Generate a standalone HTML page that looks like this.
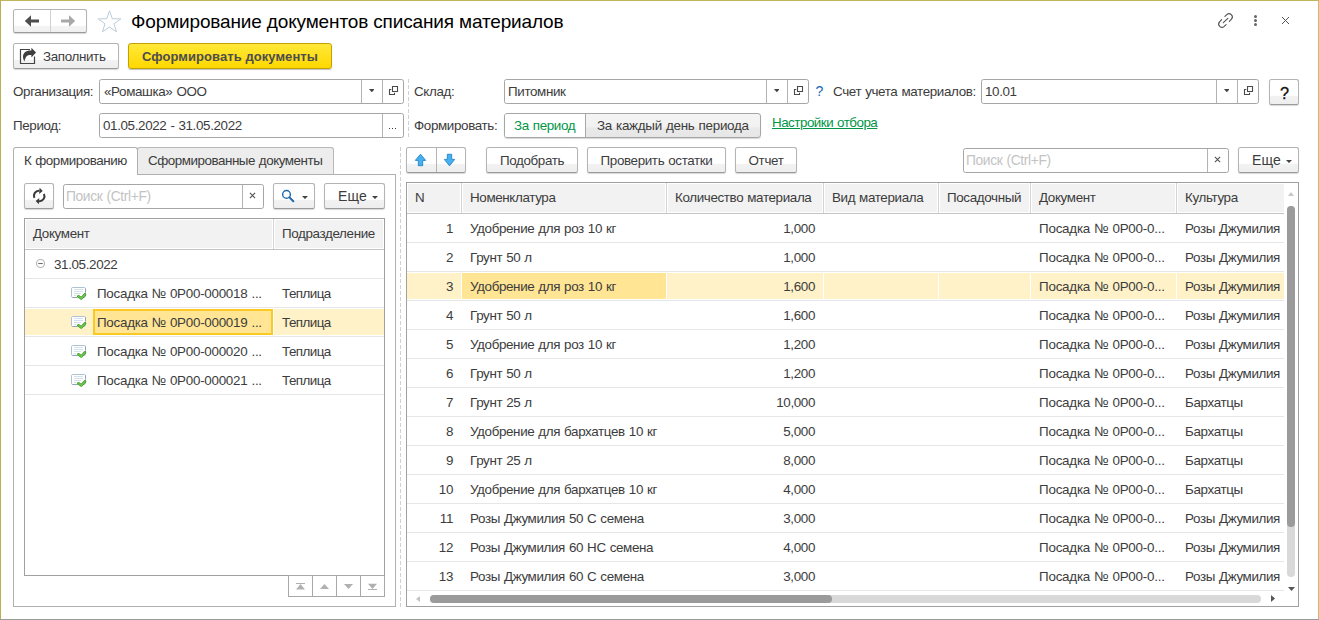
<!DOCTYPE html>
<html lang="ru">
<head>
<meta charset="utf-8">
<title>Формирование документов списания материалов</title>
<style>
html,body{margin:0;padding:0;}
body{width:1319px;height:620px;position:relative;overflow:hidden;background:#fff;font-family:"Liberation Sans",sans-serif;font-size:13.4px;color:#3c3c3c;letter-spacing:-0.36px;word-spacing:0.6px;}
.a{position:absolute;white-space:nowrap;}
.btn{box-sizing:border-box;border:1px solid #b4b4b4;border-bottom-color:#9a9a9a;border-radius:2.5px;background:linear-gradient(#fff 0,#fff 64%,#f2f2f2 68%,#eeeeee 100%);box-shadow:0 1px 1px rgba(0,0,0,.16);}
.fld{box-sizing:border-box;border:1px solid #a6a6a6;border-radius:2.5px;background:#fff;}
.vd{width:1px;background:#b3b3b3;}
.t{line-height:16px;height:16px;}
.ph{color:#c3c3c3;}
.rl{height:1px;background:#e6e6e6;}
.g{color:#009646;}
</style>
</head>
<body>
<div class="a" style="left:0;top:0;width:1319px;height:1px;background:#c4b45a;"></div>
<div class="a" style="left:0;top:0;width:1px;height:619px;background:#bcae55;"></div>
<div class="a" style="left:1318px;top:0;width:1px;height:619px;background:#d0bc5c;"></div>
<div class="a" style="left:0;top:619px;width:1319px;height:1px;background:#9a9a9a;"></div>
<div class="a btn" style="left:13px;top:9px;width:74px;height:24px;background:linear-gradient(#fff 0,#fff 70%,#f4f4f4 74%,#f0f0f0 100%);"></div>
<div class="a vd" style="left:50px;top:10px;height:22px;background:#d2d2d2;"></div>
<svg class="a" style="left:24px;top:15.3px" width="16" height="12" viewBox="0 0 16 12"><path d="M0.8 6 L7 0.3 V4.5 H15 V7.5 H7 V11.7 Z" fill="#4d4d4d"/></svg>
<svg class="a" style="left:60px;top:15.3px" width="16" height="12" viewBox="0 0 16 12"><path d="M15.2 6 L9 0.3 V4.5 H1 V7.5 H9 V11.7 Z" fill="#a8a8a8"/></svg>
<svg class="a" style="left:97px;top:9px" width="25" height="24" viewBox="0 0 25 24"><path d="M12.5 2 L15.2 9.8 L23.3 9.9 L16.8 14.8 L19.2 22.6 L12.5 17.9 L5.8 22.6 L8.2 14.8 L1.7 9.9 L9.8 9.8 Z" fill="#fff" stroke="#b3c5d3" stroke-width="0.85" transform="translate(12.5 12.5) scale(1.05 1.02) translate(-12.5 -12.5)"/></svg>
<div class="a" id="title" style="left:131px;top:10.7px;font-size:19px;line-height:22px;color:#000;letter-spacing:-0.15px;word-spacing:0;">Формирование документов списания материалов</div>
<svg class="a" style="left:1216px;top:11px" width="20" height="20" viewBox="0 0 20 20"><g fill="none" stroke="#555" stroke-width="1.15" stroke-linecap="round"><path d="M8.9 5.4 L10.77 3.57 A3.3 3.3 0 0 1 15.43 8.23 L13.4 10.3"/><path d="M10.1 13.6 L8.23 15.43 A3.3 3.3 0 0 1 3.57 10.77 L5.6 8.7"/><path d="M7.3 11.7 L11.9 7.3"/></g></svg>
<div class="a" style="left:1254px;top:15.0px;width:3px;height:3px;border-radius:50%;background:#666;"></div>
<div class="a" style="left:1254px;top:19.0px;width:3px;height:3px;border-radius:50%;background:#666;"></div>
<div class="a" style="left:1254px;top:23.0px;width:3px;height:3px;border-radius:50%;background:#666;"></div>
<svg class="a" style="left:1281px;top:16px" width="9" height="9" viewBox="0 0 9 9"><path d="M1 1 L8 8 M8 1 L1 8" stroke="#555" stroke-width="1" fill="none"/></svg>
<div class="a btn" style="left:13px;top:43px;width:106px;height:26px;"></div>
<svg class="a" style="left:19px;top:47px" width="18" height="18" viewBox="0 0 18 18"><path d="M11 2.5 H1.5 V16.5 H15.5 V9.5" fill="none" stroke="#444" stroke-width="1.2"/><path d="M12.4 0.8 L17 5.5 L12.4 10.4 V8 C10 8 8 8.2 7 10 C6.3 11.4 5.8 13 5.3 14.4 C3.6 11 3.4 8 5.2 6 C6.8 4.2 9 3.6 12.4 3.6 Z" fill="#3f3f3f"/></svg>
<div class="a t " style="left:43px;top:49px;">Заполнить</div>
<div class="a" style="left:128px;top:43px;width:204px;height:26px;box-sizing:border-box;border:1px solid #c3a004;border-radius:3px;background:linear-gradient(#ffe839,#ffd800);box-shadow:0 1px 1px rgba(0,0,0,.25);"></div>
<div class="a t " style="left:142px;top:49px;font-weight:bold;color:#4d4d4d;font-size:13px;letter-spacing:0.06px;word-spacing:0;">Сформировать документы</div>
<div class="a t " style="left:13px;top:84px;">Организация:</div>
<div class="a fld" style="left:99px;top:79px;width:305px;height:25px;"></div>
<div class="a t " style="left:104px;top:84px;">«Ромашка» ООО</div>
<div class="a vd" style="left:361px;top:80px;height:23px;"></div>
<div class="a vd" style="left:382px;top:80px;height:23px;"></div>
<svg class="a" style="left:368.7px;top:89.14999999999999px" width="5.6" height="3.3" viewBox="0 0 5.6 3.3"><path d="M0 0 H5.6 L2.8 3.3 Z" fill="#444"/></svg>
<svg class="a" style="left:388px;top:85px" width="12" height="12" viewBox="0 0 12 12"><path d="M4.5 1.5 H9.5 V6.5 H4.5 Z" fill="none" stroke="#4a4a4a" stroke-width="1.1"/><path d="M3.3 4.5 H1.5 V9.5 H6.5 V7.8" fill="none" stroke="#4a4a4a" stroke-width="1.1"/></svg>
<div class="a" style="left:408px;top:79px;width:1px;height:59px;background:repeating-linear-gradient(to bottom,#d0d0d0 0,#d0d0d0 4px,transparent 4px,transparent 6px);"></div>
<div class="a t " style="left:414px;top:84px;">Склад:</div>
<div class="a fld" style="left:504px;top:79px;width:305px;height:25px;"></div>
<div class="a t " style="left:508px;top:84px;">Питомник</div>
<div class="a vd" style="left:766px;top:80px;height:23px;"></div>
<div class="a vd" style="left:787px;top:80px;height:23px;"></div>
<svg class="a" style="left:773.7px;top:89.14999999999999px" width="5.6" height="3.3" viewBox="0 0 5.6 3.3"><path d="M0 0 H5.6 L2.8 3.3 Z" fill="#444"/></svg>
<svg class="a" style="left:793px;top:85px" width="12" height="12" viewBox="0 0 12 12"><path d="M4.5 1.5 H9.5 V6.5 H4.5 Z" fill="none" stroke="#4a4a4a" stroke-width="1.1"/><path d="M3.3 4.5 H1.5 V9.5 H6.5 V7.8" fill="none" stroke="#4a4a4a" stroke-width="1.1"/></svg>
<div class="a t " style="left:815.5px;top:83px;color:#1668b8;font-size:14px;letter-spacing:0;">?</div>
<div class="a t " style="left:833px;top:84px;">Счет учета материалов:</div>
<div class="a fld" style="left:981px;top:79px;width:278px;height:25px;"></div>
<div class="a t " style="left:985px;top:84px;">10.01</div>
<div class="a vd" style="left:1216px;top:80px;height:23px;"></div>
<div class="a vd" style="left:1237px;top:80px;height:23px;"></div>
<svg class="a" style="left:1223.7px;top:89.14999999999999px" width="5.6" height="3.3" viewBox="0 0 5.6 3.3"><path d="M0 0 H5.6 L2.8 3.3 Z" fill="#444"/></svg>
<svg class="a" style="left:1243px;top:85px" width="12" height="12" viewBox="0 0 12 12"><path d="M4.5 1.5 H9.5 V6.5 H4.5 Z" fill="none" stroke="#4a4a4a" stroke-width="1.1"/><path d="M3.3 4.5 H1.5 V9.5 H6.5 V7.8" fill="none" stroke="#4a4a4a" stroke-width="1.1"/></svg>
<div class="a btn" style="left:1269px;top:79px;width:30px;height:26px;"></div>
<div class="a t " style="left:1269.5px;top:85.3px;width:30px;text-align:center;color:#111;font-size:16.3px;letter-spacing:0;-webkit-text-stroke:0.3px #111;">?</div>
<div class="a t " style="left:13px;top:118px;">Период:</div>
<div class="a fld" style="left:99px;top:113px;width:305px;height:25px;"></div>
<div class="a t " style="left:103px;top:118px;">01.05.2022 - 31.05.2022</div>
<div class="a vd" style="left:382px;top:114px;height:23px;"></div>
<div class="a" style="left:389px;top:128px;width:1px;height:1px;background:#3a3a3a;box-shadow:0 0 0.5px #3a3a3a;"></div>
<div class="a" style="left:392px;top:128px;width:1px;height:1px;background:#3a3a3a;box-shadow:0 0 0.5px #3a3a3a;"></div>
<div class="a" style="left:395px;top:128px;width:1px;height:1px;background:#3a3a3a;box-shadow:0 0 0.5px #3a3a3a;"></div>
<div class="a t " style="left:414px;top:118px;">Формировать:</div>
<div class="a" style="left:504px;top:113px;width:257px;height:25px;box-sizing:border-box;border:1px solid #a6a6a6;border-radius:3px;background:linear-gradient(#f4f4f4 0,#f1f1f1 55%,#eaeaea 60%,#e6e6e6 100%);box-shadow:0 1px 1px rgba(0,0,0,.16);"></div>
<div class="a" style="left:505px;top:114px;width:80px;height:23px;background:#fff;border-radius:2px 0 0 2px;"></div>
<div class="a vd" style="left:585px;top:114px;height:23px;background:#a8a8a8;"></div>
<div class="a t g" style="left:514px;top:118px;">За период</div>
<div class="a t " style="left:597px;top:118px;letter-spacing:-0.27px;">За каждый день периода</div>
<div class="a t g" style="left:772px;top:115px;text-decoration:underline;letter-spacing:-0.5px;">Настройки отбора</div>
<div class="a" style="left:13px;top:174px;width:383px;height:433px;box-sizing:border-box;border:1px solid #b0b0b0;"></div>
<div class="a" style="left:137px;top:147px;width:197px;height:28px;box-sizing:border-box;border:1px solid #b8b8b8;border-bottom-color:#b0b0b0;border-radius:3px 3px 0 0;background:#ededed;"></div>
<div class="a" style="left:13px;top:147px;width:125px;height:28px;box-sizing:border-box;border:1px solid #b0b0b0;border-bottom:none;border-radius:3px 3px 0 0;background:#fff;"></div>
<div class="a t " style="left:24px;top:153px;letter-spacing:-0.43px;">К формированию</div>
<div class="a t " style="left:148px;top:153px;letter-spacing:-0.46px;">Сформированные документы</div>
<div class="a btn" style="left:24px;top:183px;width:30px;height:26px;"></div>
<svg class="a" style="left:31px;top:187px" width="16" height="18" viewBox="0 0 16 18"><g fill="none" stroke="#3a3a3a" stroke-width="2.1"><path d="M3.37 10.9 A5 5 0 0 1 8.34 3.82"/><path d="M12.9 7 A5 5 0 0 1 8 14.2"/></g><path d="M8.6 0.8 L11.7 4.1 L8.1 6.9 Z" fill="#3a3a3a"/><path d="M7.8 17.2 L4.7 13.9 L8.3 11.1 Z" fill="#3a3a3a"/></svg>
<div class="a fld" style="left:63px;top:184px;width:201px;height:25px;"></div>
<div class="a t ph" style="left:66px;top:189px;font-size:13.8px;">Поиск (Ctrl+F)</div>
<div class="a vd" style="left:242px;top:185px;height:23px;"></div>
<svg class="a" style="left:249px;top:192px" width="7" height="7" viewBox="0 0 7 7"><path d="M0.9 0.9 L6.1 6.1 M6.1 0.9 L0.9 6.1" stroke="#505050" stroke-width="1.05" fill="none"/></svg>
<div class="a btn" style="left:273px;top:183px;width:42px;height:26px;"></div>
<svg class="a" style="left:281px;top:189px" width="14" height="15" viewBox="0 0 14 15"><circle cx="5.5" cy="5.4" r="3.85" fill="none" stroke="#1c68ad" stroke-width="1.4"/><path d="M8.5 8.4 L12.3 12.2" stroke="#1c68ad" stroke-width="2" stroke-linecap="round"/></svg>
<svg class="a" style="left:302.0px;top:195.75px" width="6" height="3.1" viewBox="0 0 6 3.1"><path d="M0 0 H6 L3.0 3.1 Z" fill="#444"/></svg>
<div class="a btn" style="left:324px;top:183px;width:61px;height:26px;"></div>
<div class="a t " style="left:338px;top:188px;font-size:14px;letter-spacing:0.2px;">Еще</div>
<svg class="a" style="left:372.0px;top:195.75px" width="6" height="3.1" viewBox="0 0 6 3.1"><path d="M0 0 H6 L3.0 3.1 Z" fill="#444"/></svg>
<div class="a" style="left:24px;top:218px;width:361px;height:358px;box-sizing:border-box;border:1px solid #a0a0a0;"></div>
<div class="a" style="left:26px;top:220px;width:246px;height:28px;background:#f2f2f2;"></div>
<div class="a" style="left:275px;top:220px;width:108px;height:28px;background:#f2f2f2;"></div>
<div class="a" style="left:25px;top:249px;width:359px;height:1px;background:#c4c4c4;"></div>
<div class="a" style="left:273px;top:219px;width:1px;height:30px;background:#d4d4d4;"></div>
<div class="a t " style="left:33px;top:226px;">Документ</div>
<div class="a t " style="left:282px;top:226px;">Подразделение</div>
<div class="a" style="left:25px;top:309px;width:359px;height:26px;background:#fff2c8;"></div>
<div class="a" style="left:93px;top:309px;width:180px;height:26px;box-sizing:border-box;border:2px solid #f9c924;background:#ffe594;"></div>
<div class="a" style="left:273px;top:309px;width:1px;height:26px;background:#fff;"></div>
<div class="a rl" style="left:25px;top:278px;width:359px;"></div>
<div class="a rl" style="left:25px;top:307px;width:359px;"></div>
<div class="a rl" style="left:25px;top:336px;width:359px;"></div>
<div class="a rl" style="left:25px;top:365px;width:359px;"></div>
<div class="a rl" style="left:25px;top:394px;width:359px;"></div>
<svg class="a" style="left:35px;top:258px" width="11" height="11" viewBox="0 0 11 11"><circle cx="5.5" cy="5.5" r="4" fill="#fff" stroke="#b4b4b4" stroke-width="1.1"/><path d="M3.2 5.5 H7.8" stroke="#6e6e6e" stroke-width="1.1"/></svg>
<div class="a t " style="left:54px;top:257px;">31.05.2022</div>
<svg class="a" style="left:71px;top:287px" width="17" height="15" viewBox="0 0 17 15"><rect x="0.5" y="0.5" width="14" height="10" rx="1.2" fill="#fff" stroke="#b0c2d0"/><path d="M14.5 1.5 V5 M6 10.5 H1.5" stroke="#8da3b2" stroke-width="1" fill="none"/><path d="M3 2.5 H12 M3 4.5 H12 M3 6.5 H10 M3 8.5 H5" stroke="#d3e2ec" stroke-width="1"/><path d="M7.4 9.3 L10.3 11.5 L14 7.4" fill="none" stroke="#338f1d" stroke-width="2.6" stroke-linecap="round" stroke-linejoin="round"/><path d="M7.4 9.3 L10.3 11.5 L14 7.4" fill="none" stroke="#6fce48" stroke-width="1.3" stroke-linecap="round" stroke-linejoin="round"/></svg>
<div class="a t " style="left:97px;top:286px;letter-spacing:-0.27px;">Посадка № 0Р00-000018 ...</div>
<div class="a t " style="left:282px;top:286px;letter-spacing:-0.55px;">Теплица</div>
<svg class="a" style="left:71px;top:316px" width="17" height="15" viewBox="0 0 17 15"><rect x="0.5" y="0.5" width="14" height="10" rx="1.2" fill="#fff" stroke="#b0c2d0"/><path d="M14.5 1.5 V5 M6 10.5 H1.5" stroke="#8da3b2" stroke-width="1" fill="none"/><path d="M3 2.5 H12 M3 4.5 H12 M3 6.5 H10 M3 8.5 H5" stroke="#d3e2ec" stroke-width="1"/><path d="M7.4 9.3 L10.3 11.5 L14 7.4" fill="none" stroke="#338f1d" stroke-width="2.6" stroke-linecap="round" stroke-linejoin="round"/><path d="M7.4 9.3 L10.3 11.5 L14 7.4" fill="none" stroke="#6fce48" stroke-width="1.3" stroke-linecap="round" stroke-linejoin="round"/></svg>
<div class="a t " style="left:97px;top:315px;letter-spacing:-0.27px;">Посадка № 0Р00-000019 ...</div>
<div class="a t " style="left:282px;top:315px;letter-spacing:-0.55px;">Теплица</div>
<svg class="a" style="left:71px;top:345px" width="17" height="15" viewBox="0 0 17 15"><rect x="0.5" y="0.5" width="14" height="10" rx="1.2" fill="#fff" stroke="#b0c2d0"/><path d="M14.5 1.5 V5 M6 10.5 H1.5" stroke="#8da3b2" stroke-width="1" fill="none"/><path d="M3 2.5 H12 M3 4.5 H12 M3 6.5 H10 M3 8.5 H5" stroke="#d3e2ec" stroke-width="1"/><path d="M7.4 9.3 L10.3 11.5 L14 7.4" fill="none" stroke="#338f1d" stroke-width="2.6" stroke-linecap="round" stroke-linejoin="round"/><path d="M7.4 9.3 L10.3 11.5 L14 7.4" fill="none" stroke="#6fce48" stroke-width="1.3" stroke-linecap="round" stroke-linejoin="round"/></svg>
<div class="a t " style="left:97px;top:344px;letter-spacing:-0.27px;">Посадка № 0Р00-000020 ...</div>
<div class="a t " style="left:282px;top:344px;letter-spacing:-0.55px;">Теплица</div>
<svg class="a" style="left:71px;top:374px" width="17" height="15" viewBox="0 0 17 15"><rect x="0.5" y="0.5" width="14" height="10" rx="1.2" fill="#fff" stroke="#b0c2d0"/><path d="M14.5 1.5 V5 M6 10.5 H1.5" stroke="#8da3b2" stroke-width="1" fill="none"/><path d="M3 2.5 H12 M3 4.5 H12 M3 6.5 H10 M3 8.5 H5" stroke="#d3e2ec" stroke-width="1"/><path d="M7.4 9.3 L10.3 11.5 L14 7.4" fill="none" stroke="#338f1d" stroke-width="2.6" stroke-linecap="round" stroke-linejoin="round"/><path d="M7.4 9.3 L10.3 11.5 L14 7.4" fill="none" stroke="#6fce48" stroke-width="1.3" stroke-linecap="round" stroke-linejoin="round"/></svg>
<div class="a t " style="left:97px;top:373px;letter-spacing:-0.27px;">Посадка № 0Р00-000021 ...</div>
<div class="a t " style="left:282px;top:373px;letter-spacing:-0.55px;">Теплица</div>
<div class="a" style="left:288px;top:575px;width:97px;height:22px;box-sizing:border-box;border:1px solid #a8a8a8;background:#fff;"></div>
<div class="a" style="left:312px;top:576px;width:1px;height:20px;background:#a8a8a8;"></div>
<div class="a" style="left:336px;top:576px;width:1px;height:20px;background:#a8a8a8;"></div>
<div class="a" style="left:360px;top:576px;width:1px;height:20px;background:#a8a8a8;"></div>
<svg class="a" style="left:296px;top:583px" width="9" height="7" viewBox="0 0 9 7"><path d="M0 0.5 H9" stroke="#b0b0b0" stroke-width="1"/><path d="M0 6.5 H9 L4.5 1 Z" fill="#b0b0b0"/></svg>
<svg class="a" style="left:320px;top:584px" width="9" height="5" viewBox="0 0 9 5"><path d="M0 5 H9 L4.5 0 Z" fill="#b0b0b0"/></svg>
<svg class="a" style="left:344px;top:584px" width="9" height="5" viewBox="0 0 9 5"><path d="M0 0 H9 L4.5 5 Z" fill="#b0b0b0"/></svg>
<svg class="a" style="left:368px;top:583px" width="9" height="7" viewBox="0 0 9 7"><path d="M0 6.5 H9" stroke="#b0b0b0" stroke-width="1"/><path d="M0 0.8 H9 L4.5 6 Z" fill="#b0b0b0"/></svg>
<div class="a" style="left:400px;top:147px;width:1px;height:460px;background:repeating-linear-gradient(to bottom,#d0d0d0 0,#d0d0d0 4px,transparent 4px,transparent 6px);"></div>
<div class="a btn" style="left:406px;top:147px;width:60px;height:26px;"></div>
<div class="a vd" style="left:436px;top:148px;height:24px;background:#b4b4b4;"></div>
<svg class="a" style="left:414px;top:153px" width="13" height="14" viewBox="0 0 13 14"><path d="M6.5 1.2 L11.7 7.4 H8.7 V12.7 H4.3 V7.4 H1.3 Z" fill="#46b0f0" stroke="#2584c4" stroke-width="0.9" stroke-linejoin="miter"/></svg>
<svg class="a" style="left:443px;top:153px" width="13" height="14" viewBox="0 0 13 14"><path d="M6.5 12.8 L11.7 6.4 H8.7 V1.3 H4.3 V6.4 H1.3 Z" fill="#46b0f0" stroke="#2584c4" stroke-width="0.9" stroke-linejoin="miter"/></svg>
<div class="a btn" style="left:486px;top:147px;width:92px;height:26px;"></div>
<div class="a t " style="left:486px;top:153px;width:92px;text-align:center;">Подобрать</div>
<div class="a btn" style="left:587px;top:147px;width:139px;height:26px;"></div>
<div class="a t " style="left:587px;top:153px;width:139px;text-align:center;">Проверить остатки</div>
<div class="a btn" style="left:735px;top:147px;width:62px;height:26px;"></div>
<div class="a t " style="left:735px;top:153px;width:62px;text-align:center;">Отчет</div>
<div class="a fld" style="left:963px;top:148px;width:266px;height:25px;"></div>
<div class="a t ph" style="left:966px;top:153px;font-size:13.8px;">Поиск (Ctrl+F)</div>
<div class="a vd" style="left:1207px;top:149px;height:23px;"></div>
<svg class="a" style="left:1214px;top:156px" width="7" height="7" viewBox="0 0 7 7"><path d="M0.9 0.9 L6.1 6.1 M6.1 0.9 L0.9 6.1" stroke="#505050" stroke-width="1.05" fill="none"/></svg>
<div class="a btn" style="left:1238px;top:147px;width:61px;height:26px;"></div>
<div class="a t " style="left:1252px;top:152px;font-size:14px;letter-spacing:0.2px;">Еще</div>
<svg class="a" style="left:1286.0px;top:159.75px" width="6" height="3.1" viewBox="0 0 6 3.1"><path d="M0 0 H6 L3.0 3.1 Z" fill="#444"/></svg>
<div class="a" style="left:406px;top:182px;width:893px;height:425px;box-sizing:border-box;border:1px solid #a0a0a0;"></div>
<div class="a" style="left:408px;top:184px;width:52px;height:28px;background:#f2f2f2;"></div>
<div class="a" style="left:463px;top:184px;width:202px;height:28px;background:#f2f2f2;"></div>
<div class="a" style="left:668px;top:184px;width:154px;height:28px;background:#f2f2f2;"></div>
<div class="a" style="left:825px;top:184px;width:112px;height:28px;background:#f2f2f2;"></div>
<div class="a" style="left:940px;top:184px;width:89px;height:28px;background:#f2f2f2;"></div>
<div class="a" style="left:1032px;top:184px;width:143px;height:28px;background:#f2f2f2;"></div>
<div class="a" style="left:1178px;top:184px;width:106px;height:28px;background:#f2f2f2;"></div>
<div class="a" style="left:407px;top:213px;width:877px;height:1px;background:#c4c4c4;"></div>
<div class="a" style="left:461px;top:183px;width:1px;height:30px;background:#d4d4d4;"></div>
<div class="a" style="left:666px;top:183px;width:1px;height:30px;background:#d4d4d4;"></div>
<div class="a" style="left:823px;top:183px;width:1px;height:30px;background:#d4d4d4;"></div>
<div class="a" style="left:938px;top:183px;width:1px;height:30px;background:#d4d4d4;"></div>
<div class="a" style="left:1030px;top:183px;width:1px;height:30px;background:#d4d4d4;"></div>
<div class="a" style="left:1176px;top:183px;width:1px;height:30px;background:#d4d4d4;"></div>
<div class="a t " style="left:415px;top:190px;">N</div>
<div class="a t " style="left:470px;top:190px;">Номенклатура</div>
<div class="a t " style="left:675px;top:190px;">Количество материала</div>
<div class="a t " style="left:832px;top:190px;">Вид материала</div>
<div class="a t " style="left:947px;top:190px;">Посадочный</div>
<div class="a t " style="left:1039px;top:190px;">Документ</div>
<div class="a t " style="left:1185px;top:190px;">Культура</div>
<div class="a" style="left:407px;top:273px;width:877px;height:26px;background:#fff2c8;"></div>
<div class="a" style="left:462px;top:273px;width:204px;height:26px;background:#ffe594;"></div>
<div class="a" style="left:461px;top:273px;width:1px;height:26px;background:#fff;"></div>
<div class="a" style="left:666px;top:273px;width:1px;height:26px;background:#fff;"></div>
<div class="a" style="left:823px;top:273px;width:1px;height:26px;background:#fff;"></div>
<div class="a" style="left:938px;top:273px;width:1px;height:26px;background:#fff;"></div>
<div class="a" style="left:1030px;top:273px;width:1px;height:26px;background:#fff;"></div>
<div class="a" style="left:1176px;top:273px;width:1px;height:26px;background:#fff;"></div>
<div class="a rl" style="left:407px;top:242px;width:877px;"></div>
<div class="a t " style="left:407px;top:221px;width:46px;text-align:right;">1</div>
<div class="a t " style="left:470px;top:221px;">Удобрение для роз 10 кг</div>
<div class="a t " style="left:667px;top:221px;width:148px;text-align:right;">1,000</div>
<div class="a t " style="left:1039px;top:221px;letter-spacing:-0.22px;">Посадка № 0Р00-0...</div>
<div class="a t " style="left:1185px;top:221px;">Розы Джумилия</div>
<div class="a rl" style="left:407px;top:271px;width:877px;"></div>
<div class="a t " style="left:407px;top:250px;width:46px;text-align:right;">2</div>
<div class="a t " style="left:470px;top:250px;">Грунт 50 л</div>
<div class="a t " style="left:667px;top:250px;width:148px;text-align:right;">1,000</div>
<div class="a t " style="left:1039px;top:250px;letter-spacing:-0.22px;">Посадка № 0Р00-0...</div>
<div class="a t " style="left:1185px;top:250px;">Розы Джумилия</div>
<div class="a rl" style="left:407px;top:300px;width:877px;"></div>
<div class="a t " style="left:407px;top:279px;width:46px;text-align:right;">3</div>
<div class="a t " style="left:470px;top:279px;">Удобрение для роз 10 кг</div>
<div class="a t " style="left:667px;top:279px;width:148px;text-align:right;">1,600</div>
<div class="a t " style="left:1039px;top:279px;letter-spacing:-0.22px;">Посадка № 0Р00-0...</div>
<div class="a t " style="left:1185px;top:279px;">Розы Джумилия</div>
<div class="a rl" style="left:407px;top:329px;width:877px;"></div>
<div class="a t " style="left:407px;top:308px;width:46px;text-align:right;">4</div>
<div class="a t " style="left:470px;top:308px;">Грунт 50 л</div>
<div class="a t " style="left:667px;top:308px;width:148px;text-align:right;">1,600</div>
<div class="a t " style="left:1039px;top:308px;letter-spacing:-0.22px;">Посадка № 0Р00-0...</div>
<div class="a t " style="left:1185px;top:308px;">Розы Джумилия</div>
<div class="a rl" style="left:407px;top:358px;width:877px;"></div>
<div class="a t " style="left:407px;top:337px;width:46px;text-align:right;">5</div>
<div class="a t " style="left:470px;top:337px;">Удобрение для роз 10 кг</div>
<div class="a t " style="left:667px;top:337px;width:148px;text-align:right;">1,200</div>
<div class="a t " style="left:1039px;top:337px;letter-spacing:-0.22px;">Посадка № 0Р00-0...</div>
<div class="a t " style="left:1185px;top:337px;">Розы Джумилия</div>
<div class="a rl" style="left:407px;top:387px;width:877px;"></div>
<div class="a t " style="left:407px;top:366px;width:46px;text-align:right;">6</div>
<div class="a t " style="left:470px;top:366px;">Грунт 50 л</div>
<div class="a t " style="left:667px;top:366px;width:148px;text-align:right;">1,200</div>
<div class="a t " style="left:1039px;top:366px;letter-spacing:-0.22px;">Посадка № 0Р00-0...</div>
<div class="a t " style="left:1185px;top:366px;">Розы Джумилия</div>
<div class="a rl" style="left:407px;top:416px;width:877px;"></div>
<div class="a t " style="left:407px;top:395px;width:46px;text-align:right;">7</div>
<div class="a t " style="left:470px;top:395px;">Грунт 25 л</div>
<div class="a t " style="left:667px;top:395px;width:148px;text-align:right;">10,000</div>
<div class="a t " style="left:1039px;top:395px;letter-spacing:-0.22px;">Посадка № 0Р00-0...</div>
<div class="a t " style="left:1185px;top:395px;">Бархатцы</div>
<div class="a rl" style="left:407px;top:445px;width:877px;"></div>
<div class="a t " style="left:407px;top:424px;width:46px;text-align:right;">8</div>
<div class="a t " style="left:470px;top:424px;">Удобрение для бархатцев 10 кг</div>
<div class="a t " style="left:667px;top:424px;width:148px;text-align:right;">5,000</div>
<div class="a t " style="left:1039px;top:424px;letter-spacing:-0.22px;">Посадка № 0Р00-0...</div>
<div class="a t " style="left:1185px;top:424px;">Бархатцы</div>
<div class="a rl" style="left:407px;top:474px;width:877px;"></div>
<div class="a t " style="left:407px;top:453px;width:46px;text-align:right;">9</div>
<div class="a t " style="left:470px;top:453px;">Грунт 25 л</div>
<div class="a t " style="left:667px;top:453px;width:148px;text-align:right;">8,000</div>
<div class="a t " style="left:1039px;top:453px;letter-spacing:-0.22px;">Посадка № 0Р00-0...</div>
<div class="a t " style="left:1185px;top:453px;">Бархатцы</div>
<div class="a rl" style="left:407px;top:503px;width:877px;"></div>
<div class="a t " style="left:407px;top:482px;width:46px;text-align:right;">10</div>
<div class="a t " style="left:470px;top:482px;">Удобрение для бархатцев 10 кг</div>
<div class="a t " style="left:667px;top:482px;width:148px;text-align:right;">4,000</div>
<div class="a t " style="left:1039px;top:482px;letter-spacing:-0.22px;">Посадка № 0Р00-0...</div>
<div class="a t " style="left:1185px;top:482px;">Бархатцы</div>
<div class="a rl" style="left:407px;top:532px;width:877px;"></div>
<div class="a t " style="left:407px;top:511px;width:46px;text-align:right;">11</div>
<div class="a t " style="left:470px;top:511px;">Розы Джумилия 50 С семена</div>
<div class="a t " style="left:667px;top:511px;width:148px;text-align:right;">3,000</div>
<div class="a t " style="left:1039px;top:511px;letter-spacing:-0.22px;">Посадка № 0Р00-0...</div>
<div class="a t " style="left:1185px;top:511px;">Розы Джумилия</div>
<div class="a rl" style="left:407px;top:561px;width:877px;"></div>
<div class="a t " style="left:407px;top:540px;width:46px;text-align:right;">12</div>
<div class="a t " style="left:470px;top:540px;">Розы Джумилия 60 НС семена</div>
<div class="a t " style="left:667px;top:540px;width:148px;text-align:right;">4,000</div>
<div class="a t " style="left:1039px;top:540px;letter-spacing:-0.22px;">Посадка № 0Р00-0...</div>
<div class="a t " style="left:1185px;top:540px;">Розы Джумилия</div>
<div class="a rl" style="left:407px;top:590px;width:877px;"></div>
<div class="a t " style="left:407px;top:569px;width:46px;text-align:right;">13</div>
<div class="a t " style="left:470px;top:569px;">Розы Джумилия 60 С семена</div>
<div class="a t " style="left:667px;top:569px;width:148px;text-align:right;">3,000</div>
<div class="a t " style="left:1039px;top:569px;letter-spacing:-0.22px;">Посадка № 0Р00-0...</div>
<div class="a t " style="left:1185px;top:569px;">Розы Джумилия</div>
<svg class="a" style="left:1288px;top:192.3px" width="6" height="4" viewBox="0 0 6 4"><path d="M0 4 H6 L3 0 Z" fill="#c6c6c6"/></svg>
<div class="a" style="left:1287px;top:206px;width:8px;height:371px;border-radius:4px;background:#d9d9d9;"></div>
<div class="a" style="left:1287px;top:206px;width:8px;height:321px;border-radius:4px;background:#9b9b9b;"></div>
<svg class="a" style="left:1288px;top:587px" width="7" height="4" viewBox="0 0 7 4"><path d="M0 0 H7 L3.5 4 Z" fill="#555"/></svg>
<svg class="a" style="left:416.3px;top:596px" width="4" height="6" viewBox="0 0 4 6"><path d="M4 0 V6 L0 3 Z" fill="#c4c4c4"/></svg>
<div class="a" style="left:430px;top:595px;width:831px;height:8px;border-radius:4px;background:#d9d9d9;"></div>
<div class="a" style="left:430px;top:595px;width:402px;height:8px;border-radius:4px;background:#9b9b9b;"></div>
<svg class="a" style="left:1271px;top:595px" width="4" height="7" viewBox="0 0 4 7"><path d="M0 0 V7 L4 3.5 Z" fill="#555"/></svg>
</body>
</html>
